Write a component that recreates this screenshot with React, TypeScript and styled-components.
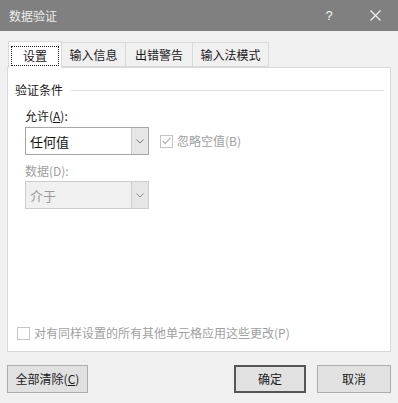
import styled, { createGlobalStyle } from 'styled-components';

const GlobalStyle = createGlobalStyle`
  html, body {
    margin: 0;
    padding: 0;
    background: #f0f0f0;
  }
  body {
    font-family: 'Noto Sans CJK SC', 'Noto Sans', sans-serif;
    font-size: 12px;
    color: #1a1a1a;
  }
`;

const Window = styled.div`
  width: 398px;
  height: 403px;
  background: #f0f0f0;
  display: flex;
  flex-direction: column;
  overflow: hidden;
`;

const TitleBar = styled.div`
  height: 31px;
  background: #808080;
  color: #ececec;
  display: flex;
  align-items: center;
  padding-left: 9px;
  font-size: 12px;
  line-height: 16px;
`;

const Title = styled.span`
  flex: 1;
`;

const TitleButton = styled.span`
  width: 46px;
  height: 31px;
  display: flex;
  align-items: center;
  justify-content: center;
  color: #f4f4f4;
  font-size: 13px;
  font-family: 'Liberation Sans', sans-serif;
`;

const Body = styled.div`
  padding: 10px 7px 0 7px;
  display: flex;
  flex-direction: column;
`;

const TabRow = styled.div`
  display: flex;
  align-items: flex-end;
  height: 26px;
  padding-left: 1px;
  position: relative;
  z-index: 1;
`;

const Tab = styled.div<{ $w: number; $active?: boolean }>`
  width: ${({ $w }) => $w}px;
  height: ${({ $active }) => ($active ? 27 : 25)}px;
  box-sizing: border-box;
  border: 1px solid #d9d9d9;
  border-bottom: ${({ $active }) => ($active ? 'none' : '1px solid #d9d9d9')};
  border-left: ${({ $active }) => ($active ? '1px solid #d9d9d9' : 'none')};
  background: ${({ $active }) => ($active ? '#ffffff' : '#f0f0f0')};
  margin-bottom: ${({ $active }) => ($active ? -1 : 0)}px;
  display: flex;
  align-items: center;
  justify-content: center;
  line-height: 16px;
  padding-top: ${({ $active }) => ($active ? 1 : 0)}px;
`;

const Focus = styled.span`
  outline: 1px dotted #222;
  padding: 1px 11px;
  line-height: 16px;
`;

const Panel = styled.div`
  height: 285px;
  box-sizing: border-box;
  background: #ffffff;
  border: 1px solid #d9d9d9;
  display: flex;
  flex-direction: column;
  padding: 14px 7px 10px 7px;
`;

const GroupHead = styled.div`
  display: flex;
  align-items: center;
  gap: 8px;
  line-height: 16px;
  &::after {
    content: '';
    flex: 1;
    height: 1px;
    background: #dcdcdc;
    margin-right: -1px;
  }
`;

const Label = styled.div<{ $disabled?: boolean; $mt: number }>`
  margin: ${({ $mt }) => $mt}px 0 0 10px;
  line-height: 16px;
  color: ${({ $disabled }) => ($disabled ? '#a0a0a0' : '#1a1a1a')};
`;

const FieldRow = styled.div<{ $mt: number }>`
  display: flex;
  align-items: center;
  margin: ${({ $mt }) => $mt}px 0 0 10px;
`;

const Select = styled.div<{ $disabled?: boolean }>`
  width: 124px;
  height: 28px;
  box-sizing: border-box;
  border: 1px solid ${({ $disabled }) => ($disabled ? '#cccccc' : '#a6a6a6')};
  background: ${({ $disabled }) => ($disabled ? '#f0f0f0' : '#ffffff')};
  display: flex;
  align-items: stretch;
`;

const SelectText = styled.span<{ $disabled?: boolean }>`
  flex: 1;
  display: flex;
  align-items: center;
  padding-left: 4px;
  font-size: 13px;
  color: ${({ $disabled }) => ($disabled ? '#9a9a9a' : '#111')};
`;

const DropButton = styled.span<{ $disabled?: boolean }>`
  width: 16px;
  border-left: 1px solid ${({ $disabled }) => ($disabled ? '#cccccc' : '#c8c8c8')};
  background: #e6e6e6;
  display: flex;
  align-items: center;
  justify-content: center;
`;

const Check = styled.span`
  width: 13px;
  height: 13px;
  box-sizing: border-box;
  border: 1px solid #c4c4c4;
  background: #ffffff;
  display: inline-flex;
  align-items: center;
  justify-content: center;
  flex-shrink: 0;
`;

const CheckLabel = styled.label<{ $ml?: number }>`
  display: flex;
  align-items: center;
  gap: 4px;
  color: #a0a0a0;
  line-height: 16px;
  margin-left: ${({ $ml }) => $ml ?? 0}px;
`;

const Spacer = styled.div`
  flex: 1;
`;

const Footer = styled.div`
  display: flex;
  align-items: center;
  margin-top: 13px;
`;

const Button = styled.button<{ $w: number; $default?: boolean; $ml?: number }>`
  width: ${({ $w }) => $w}px;
  height: 28px;
  margin-left: ${({ $ml }) => $ml ?? 0}px;
  box-sizing: border-box;
  background: #e1e1e1;
  border: ${({ $default }) => ($default ? '2px solid #555555' : '1px solid #adadad')};
  font-family: inherit;
  font-size: 12px;
  color: #1a1a1a;
  padding: 0;
  line-height: 16px;
`;

const Chevron = ({ color }: { color: string }) => (
  <svg width="8" height="5" viewBox="0 0 8 5">
    <path d="M0.5 0.5 L4 4 L7.5 0.5" fill="none" stroke={color} strokeWidth="1" />
  </svg>
);

export default function App() {
  return (
    <>
      <GlobalStyle />
      <Window>
        <TitleBar>
          <Title>数据验证</Title>
          <TitleButton>?</TitleButton>
          <TitleButton>
            <svg width="11" height="11" viewBox="0 0 11 11">
              <path d="M0.5 0.5 L10.5 10.5 M10.5 0.5 L0.5 10.5" stroke="#f4f4f4" strokeWidth="1.2" />
            </svg>
          </TitleButton>
        </TitleBar>
        <Body>
          <TabRow>
            <Tab $w={54} $active>
              <Focus>设置</Focus>
            </Tab>
            <Tab $w={64}>输入信息</Tab>
            <Tab $w={67}>出错警告</Tab>
            <Tab $w={76}>输入法模式</Tab>
          </TabRow>
          <Panel>
            <GroupHead>验证条件</GroupHead>
            <Label $mt={10}>
              允许(<u>A</u>):
            </Label>
            <FieldRow $mt={3}>
              <Select>
                <SelectText>任何值</SelectText>
                <DropButton>
                  <Chevron color="#777" />
                </DropButton>
              </Select>
              <CheckLabel $ml={11}>
                <Check>
                  <svg width="9" height="8" viewBox="0 0 9 8">
                    <path d="M0.8 4 L3.3 6.6 L8.2 0.8" fill="none" stroke="#b0b0b0" strokeWidth="1.1" />
                  </svg>
                </Check>
                忽略空值(B)
              </CheckLabel>
            </FieldRow>
            <Label $disabled $mt={8}>
              数据(D):
            </Label>
            <FieldRow $mt={2}>
              <Select $disabled>
                <SelectText $disabled>介于</SelectText>
                <DropButton $disabled>
                  <Chevron color="#888" />
                </DropButton>
              </Select>
            </FieldRow>
            <Spacer />
            <CheckLabel $ml={2}>
              <Check />
              对有同样设置的所有其他单元格应用这些更改(P)
            </CheckLabel>
          </Panel>
          <Footer>
            <Button $w={81}>
              全部清除(<u>C</u>)
            </Button>
            <Spacer />
            <Button $w={72} $default>
              确定
            </Button>
            <Button $w={74} $ml={11}>
              取消
            </Button>
          </Footer>
        </Body>
      </Window>
    </>
  );
}
